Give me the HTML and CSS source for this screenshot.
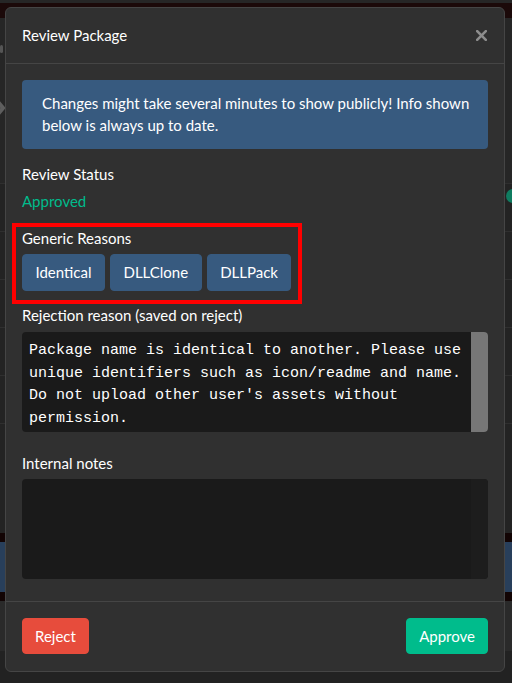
FILE: index.html
```html
<!DOCTYPE html>
<html lang="en">
<head>
<meta charset="utf-8">
<title>Review Package</title>
<link rel="stylesheet" href="styles.css">
</head>
<body>
<div class="page">
  <div class="top-strip"></div>
  <div class="navbar"></div>
  <div class="hero">
    <span class="hero-mark"></span>
    <svg class="hero-chevron" width="14" height="30" viewBox="0 0 14 30"><path d="M2 3 L12 15 L2 27" stroke="#5e5e5e" stroke-width="4" fill="none"/></svg>
  </div>
  <div class="row row-status"><span class="dot"></span></div>
  <div class="row"></div>
  <div class="row"></div>
  <div class="row"></div>
  <div class="row"></div>
  <div class="row row-last"></div>
  <div class="band-dark"></div>
  <div class="band-blue"></div>
  <div class="band-dark"></div>
  <div class="band-gray"></div>
  <div class="band-bottom"></div>
</div>

<div class="modal">
  <div class="modal-header">
    <h5 class="modal-title">Review Package</h5>
    <button class="close" aria-label="Close">
      <svg width="11" height="11" viewBox="0 0 11 11"><path d="M1.2 1.2 L9.8 9.8 M9.8 1.2 L1.2 9.8" stroke="#8d8d8d" stroke-width="2.6" stroke-linecap="square" fill="none"/></svg>
    </button>
  </div>
  <div class="modal-body">
    <div class="alert">Changes might take several minutes to show publicly! Info shown below is always up to date.</div>

    <div class="label label-strong">Review Status</div>
    <div class="status-approved">Approved</div>

    <div class="reasons">
      <div class="label">Generic Reasons</div>
      <div class="btn-row">
        <button class="btn btn-primary">Identical</button>
        <button class="btn btn-primary">DLLClone</button>
        <button class="btn btn-primary">DLLPack</button>
      </div>
    </div>

    <div class="label label-tight">Rejection reason (saved on reject)</div>
    <div class="textarea textarea-reject">
      <div class="textarea-text">Package name is identical to another. Please use unique identifiers such as icon/readme and name. Do not upload other user's assets without permission.</div>
      <div class="scrollbar"></div>
    </div>

    <div class="label label-strong label-notes">Internal notes</div>
    <div class="textarea textarea-notes">
      <div class="textarea-text"></div>
      <div class="scrollbar scrollbar-empty"></div>
    </div>
  </div>
  <div class="modal-footer">
    <button class="btn btn-danger">Reject</button>
    <button class="btn btn-success">Approve</button>
  </div>
</div>
</body>
</html>
```
FILE: styles.css
```css
* {
  box-sizing: border-box;
}

html, body {
  margin: 0;
  padding: 0;
}

body {
  width: 512px;
  height: 683px;
  overflow: hidden;
  background: #222222;
  font-family: Lato, "Noto Sans", sans-serif;
  font-size: 15px;
  line-height: 1.5;
  color: #ffffff;
  position: relative;
}

/* ---------- dimmed page behind the modal ---------- */
.page {
  height: 683px;
  display: flex;
  flex-direction: column;
  overflow: hidden;
}

.top-strip {
  height: 3px;
  background: #262626;
}

.navbar {
  height: 15px;
  background: #1b0909;
}

.hero {
  height: 165px;
  background: #262626;
  padding-top: 27px;
  display: flex;
  flex-direction: column;
}

.hero-mark {
  width: 3px;
  height: 8px;
  background: #555555;
  border-radius: 2px;
}

.hero-chevron {
  margin-top: 40px;
  margin-left: -9px;
}

.row {
  height: 48px;
  border-top: 1px solid #2f2f2f;
  background: #232323;
  display: flex;
  align-items: flex-start;
  justify-content: flex-end;
}

.row-last {
  flex: 0 0 110px;
}

.dot {
  width: 14px;
  height: 14px;
  margin-top: 5px;
  border-radius: 50%;
  background: #0f7c60;
  margin-right: -8px;
}

.band-dark {
  height: 9px;
  background: #120404;
}

.band-blue {
  height: 50px;
  background: #283f5b;
}

.band-gray {
  height: 50px;
  background: #2a2a2a;
}

.band-bottom {
  flex: 1;
  background: #222222;
}

/* ---------- modal ---------- */
.modal {
  position: absolute;
  left: 5px;
  top: 7px;
  width: 500px;
  background: #303030;
  border: 1px solid #454545;
  border-radius: 6px;
}

.modal-header {
  display: flex;
  justify-content: space-between;
  align-items: center;
  padding: 16px;
  border-bottom: 1px solid #454545;
}

.modal-title {
  margin: 0;
  font-size: 15px;
  font-weight: 400;
  line-height: 22.5px;
  color: #ffffff;
}

.close {
  background: none;
  border: 0;
  padding: 0;
  margin-right: 1px;
  width: 11px;
  height: 11px;
  display: flex;
}

.modal-body {
  padding: 16px 16px 22px;
}

.alert {
  background: #375a7f;
  border-radius: 4px;
  padding: 12px 12px 12px 20px;
  margin-bottom: 14px;
  color: #ffffff;
}

.label {
  line-height: 22.5px;
  color: #ffffff;
  margin-bottom: 5px;
}

.label-tight {
  margin-bottom: 6px;
}

.label-notes {
  margin-top: 3px;
  margin-bottom: 4px;
}

.status-approved {
  color: #00bc8c;
  margin-bottom: 10px;
}

.reasons {
  width: 290px;
  margin-left: -10px;
  border: 4px solid #ff0000;
  padding: 0 0 9px 6px;
}

.reasons .label {
  margin-bottom: 5px;
}

.btn-row {
  display: flex;
  gap: 5px;
}

.btn {
  font-family: Lato, "Noto Sans", sans-serif;
  font-size: 15px;
  line-height: 22.5px;
  padding: 6px 12px;
  border: 1px solid transparent;
  border-radius: 4px;
  color: #ffffff;
  cursor: pointer;
}

.btn-row .btn {
  padding: 6px 12.5px;
}

.btn-primary {
  background: #375a7f;
  border-color: #375a7f;
}

.btn-danger {
  background: #e74c3c;
  border-color: #e74c3c;
}

.btn-success {
  background: #00bc8c;
  border-color: #00bc8c;
}

.textarea {
  height: 100px;
  display: flex;
  background: #1a1a1a;
  border-radius: 4px;
  overflow: hidden;
}

.textarea-reject {
  margin-bottom: 20px;
}

.textarea-text {
  flex: 1;
  padding: 8px 0 0 7px;
  font-family: "Liberation Mono", "Courier New", monospace;
  font-size: 15px;
  line-height: 22.5px;
  color: #ffffff;
}

.scrollbar {
  width: 17px;
  background: #777777;
}

.scrollbar-empty {
  background: #1d1d1d;
}

.modal-footer {
  display: flex;
  justify-content: space-between;
  align-items: center;
  padding: 16px 16px 17px;
  border-top: 1px solid #454545;
}
```
